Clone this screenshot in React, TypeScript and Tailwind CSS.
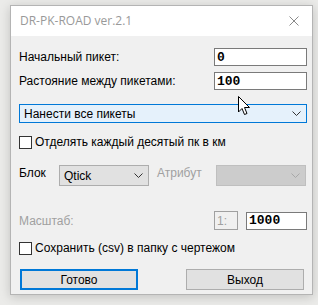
import React from 'react';

const labelFont = { fontFamily: '"Liberation Sans", Arial, sans-serif' };

const Chevron = ({ color = '#555' }: { color?: string }) => (
  <svg width="9" height="5" viewBox="0 0 9 5" className="shrink-0">
    <path d="M0.5 0.5 L4.5 4.5 L8.5 0.5" fill="none" stroke={color} strokeWidth="1" />
  </svg>
);

const Checkbox = ({ label }: { label: string }) => (
  <div className="flex items-center h-[14px]">
    <div className="w-[13px] h-[13px] border border-[#333] bg-white shrink-0" />
    <span className="ml-[3px] text-[12px] text-black leading-none">{label}</span>
  </div>
);

const NumInput = ({ value, w }: { value: string; w: string }) => (
  <div className={`${w} h-[18px] border border-[#7a7a7a] bg-white flex items-center pl-[2px]`}>
    <span
      className="text-[13px] font-bold text-black leading-none"
      style={{ fontFamily: '"Liberation Mono", "DejaVu Sans Mono", monospace' }}
    >
      {value}
    </span>
  </div>
);

const Cursor = () => (
  <svg width="13" height="20" viewBox="0 0 13 20" className="absolute left-[238px] top-[96px]">
    <path
      d="M0.5 0.5 L0.5 16 L4 12.5 L6.5 18.5 L9 17.5 L6.5 11.5 L11.5 11.5 Z"
      fill="#fff"
      stroke="#000"
      strokeWidth="1"
      strokeLinejoin="miter"
    />
  </svg>
);

export default function App() {
  return (
    <div className="relative w-[318px] h-[305px] bg-[#ebebe9] pl-[10px] pt-[5px]" style={labelFont}>
      <div className="w-[303px] h-[290px] border border-[#b4b4b4] flex flex-col shadow-[0_2px_10px_rgba(0,0,0,0.18)]">
        {/* title bar */}
        <div className="h-[30px] bg-white flex items-center justify-between pl-[9px] pr-[13px]">
          <span
            className="text-[12px] text-[#999999]"
            style={{ fontFamily: '"Open Sans", "Noto Sans", sans-serif' }}
          >
            DR-PK-ROAD ver.2.1
          </span>
          <svg width="10" height="10" viewBox="0 0 10 10">
            <path d="M0.5 0.5 L9.5 9.5 M9.5 0.5 L0.5 9.5" stroke="#8a8a8a" strokeWidth="1" />
          </svg>
        </div>

        {/* body */}
        <div className="flex-1 bg-[#f0f0f0] pl-[8px] pr-[5px] flex flex-col">
          <div className="mt-[12px] flex items-center justify-between">
            <span className="text-[12px] text-black">Начальный пикет:</span>
            <NumInput value="0" w="w-[93px]" />
          </div>
          <div className="mt-[6px] flex items-center justify-between">
            <span className="text-[12px] text-black">Растояние между пикетами:</span>
            <NumInput value="100" w="w-[93px]" />
          </div>

          <div className="mt-[14px] h-[19px] border border-[#0078d7] bg-[#e5f1fb] flex items-center justify-between pl-[4px] pr-[5px]">
            <span className="text-[12px] text-black">Нанести все пикеты</span>
            <Chevron color="#333" />
          </div>

          <div className="mt-[12px]">
            <Checkbox label="Отделять каждый десятый пк в км" />
          </div>

          <div className="mt-[16px] flex items-start h-[21px]">
            <span className="w-[40px] text-[12px] text-black leading-[14px] pt-[1px]">Блок</span>
            <div className="w-[90px] h-[21px] border border-[#adadad] bg-[#e1e1e1] flex items-center justify-between pl-[4px] pr-[5px]">
              <span className="text-[12px] text-black">Qtick</span>
              <Chevron color="#333" />
            </div>
            <span className="ml-[8px] w-[59px] text-[12px] text-[#a0a0a0] leading-[14px] pt-[1px]">Атрибут</span>
            <div className="w-[90px] h-[21px] border border-[#bfbfbf] bg-[#cccccc] flex items-center justify-end pr-[5px]">
              <Chevron color="#a8a8a8" />
            </div>
          </div>

          <div className="mt-[25px] flex items-center h-[19px]">
            <span className="text-[12px] text-[#a0a0a0]">Масштаб:</span>
            <div className="ml-auto w-[24px] h-[19px] border border-[#a0a0a0] flex items-center pl-[2px]">
              <span className="text-[12px] text-[#a0a0a0]">1:</span>
            </div>
            <div className="ml-[8px]">
              <NumInput value="1000" w="w-[61px]" />
            </div>
          </div>

          <div className="mt-[11px]">
            <Checkbox label="Сохранить (csv) в папку с чертежом" />
          </div>

          <div className="mt-[14px] flex items-center justify-between pl-[1px] pr-[3px]">
            <div className="w-[118px] h-[21px] border-2 border-[#0078d7] bg-[#e1e1e1] flex items-center justify-center">
              <span className="text-[12px] text-black">Готово</span>
            </div>
            <div className="w-[118px] h-[21px] border border-[#adadad] bg-[#e1e1e1] flex items-center justify-center">
              <span className="text-[12px] text-black">Выход</span>
            </div>
          </div>
        </div>
      </div>
      <Cursor />
    </div>
  );
}
